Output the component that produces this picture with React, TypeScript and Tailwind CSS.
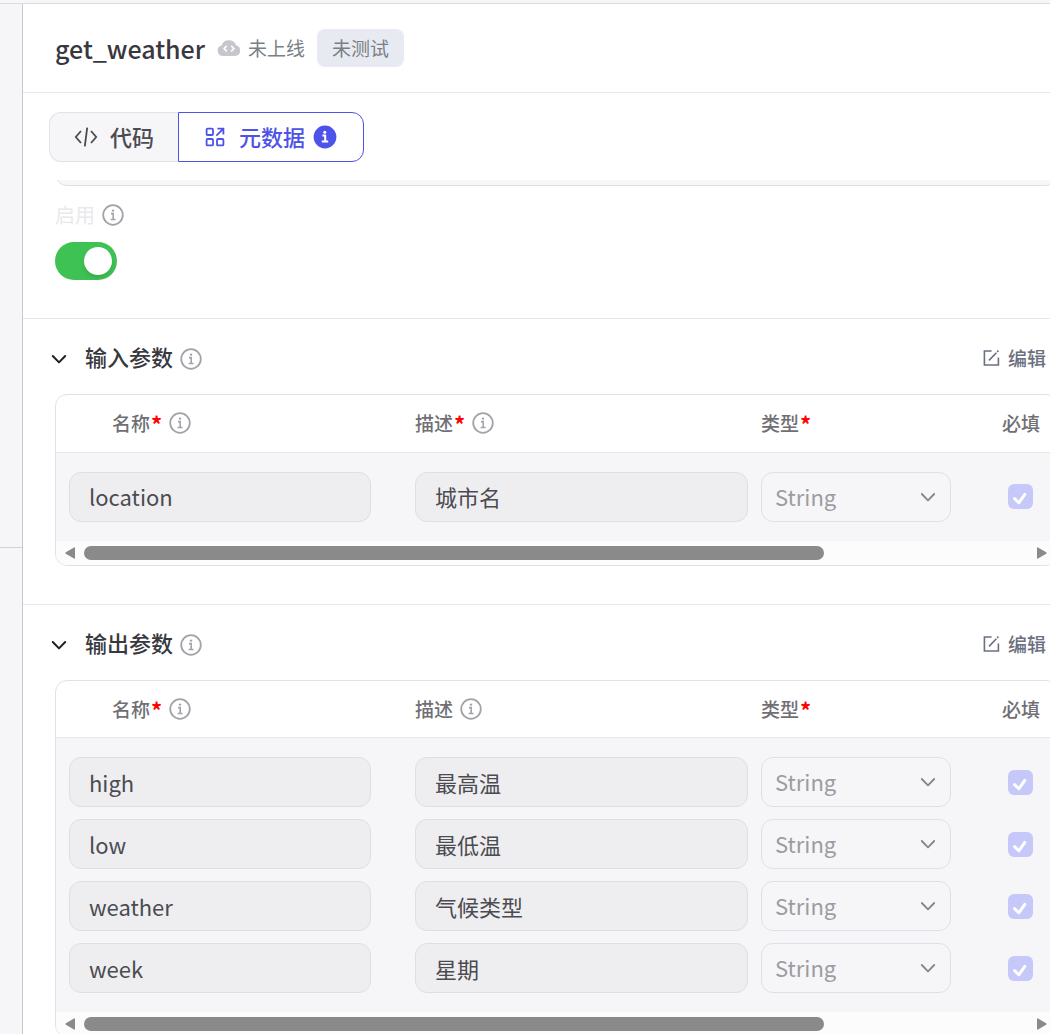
import { FunctionComponent, ReactNode } from 'react';

type Param = {
    name: string;
    description: string;
};

type ParamSectionProps = {
    title: string;
    params: Param[];
    descriptionRequired?: boolean;
};

const inputParams: Param[] = [{ name: 'location', description: '城市名' }];

const outputParams: Param[] = [
    { name: 'high', description: '最高温' },
    { name: 'low', description: '最低温' },
    { name: 'weather', description: '气候类型' },
    { name: 'week', description: '星期' },
];

const InfoIcon = () => (
    <svg viewBox="0 0 22 22" className="size-[22px] shrink-0 text-[#a3a4a9]" fill="none" stroke="currentColor">
        <circle cx="11" cy="11" r="9.8" strokeWidth="1.8" />
        <circle cx="11" cy="6.6" r="1.2" fill="currentColor" stroke="none" />
        <path d="M9 9.6h2.2v6M8.6 15.5h5" strokeWidth="1.6" />
    </svg>
);

const InfoSolidIcon = () => (
    <svg viewBox="0 0 24 24" className="size-6 shrink-0" fill="none">
        <circle cx="12" cy="12" r="11.4" fill="#4d53e8" />
        <circle cx="11.8" cy="7.2" r="1.5" fill="#fff" />
        <path d="M9.4 10.6h2.8v6M8.8 16.6h6.4" stroke="#fff" strokeWidth="2" />
    </svg>
);

const CloudCodeIcon = () => (
    <svg viewBox="0 0 24 18" className="h-[18px] w-6 shrink-0" fill="none">
        <path
            d="M6 17a5.4 5.4 0 0 1-1.4-10.6A7.6 7.6 0 0 1 19 6.2 5.5 5.5 0 0 1 18.2 17Z"
            fill="#c6c6cc"
        />
        <path d="m9.8 6.8-2.7 2.8 2.7 2.8M14.2 6.8l2.7 2.8-2.7 2.8" stroke="#fff" strokeWidth="1.6" />
    </svg>
);

const CodeIcon = () => (
    <svg viewBox="0 0 24 22" className="h-[22px] w-6 shrink-0" fill="none" stroke="#4b4b50" strokeWidth="1.8">
        <path d="m7 5-5.2 6L7 17M17 5l5.2 6-5.2 6M13.2 1.6 10.8 20.4" />
    </svg>
);

const MetadataIcon = () => (
    <svg viewBox="0 0 20 20" className="size-5 shrink-0" fill="none" stroke="#4d53e8" strokeWidth="1.8">
        <rect x="1.6" y="1.6" width="6.4" height="6.4" rx="1" />
        <rect x="1.6" y="12" width="6.4" height="6.4" rx="1" />
        <rect x="12" y="12" width="6.4" height="6.4" rx="1" />
        <path d="M11.4 8.6 18.2 1.8M12.4 1.6h6v6" />
    </svg>
);

const EditIcon = () => (
    <svg viewBox="0 0 18 18" className="size-[18px] shrink-0" fill="none" stroke="#6b7080" strokeWidth="1.6">
        <path d="M9.6 2H2.4v14h14V8.6M7 11.4l7.4-7.6" />
        <path d="m15.2 2.8 1.2-1.2" strokeWidth="1.8" />
    </svg>
);

const ChevronIcon = ({ className }: { className: string }) => (
    <svg viewBox="0 0 16 16" className={className} fill="none" stroke="currentColor" strokeLinecap="round" strokeLinejoin="round">
        <path d="m1.8 5 6.2 6.4L14.2 5" />
    </svg>
);

const HeaderCell = ({ children, required, info }: { children: ReactNode; required?: boolean; info?: boolean }) => (
    <span className="flex items-center">
        {children}
        {required && <span className="ml-px text-[22px] font-bold text-[#ff0000]">*</span>}
        {info && (
            <span className="ml-[7px]">
                <InfoIcon />
            </span>
        )}
    </span>
);

const ScrollBar = () => (
    <div className="flex h-6 items-center gap-[9px] bg-[#fcfcfc] pr-[10px] pl-[9px]" aria-hidden="true">
        <svg viewBox="0 0 10 12" className="h-3 w-[10px]" fill="#8a8a8a">
            <path d="M10 1v10q0 1-1 .6L.8 6.8q-.8-.8 0-1.6L9 .4Q10 0 10 1Z" />
        </svg>
        <div className="flex-1">
            <div className="h-[14px] w-[78.4%] rounded-full bg-[#8a8a8a]" />
        </div>
        <svg viewBox="0 0 10 12" className="h-3 w-[10px]" fill="#8a8a8a">
            <path d="M0 1v10q0 1 1 .6l8.2-4.8q.8-.8 0-1.6L1 .4Q0 0 0 1Z" />
        </svg>
    </div>
);

const ParamSection: FunctionComponent<ParamSectionProps> = ({ title, params, descriptionRequired }) => {
    const field =
        'block h-[50px] w-full rounded-xl border border-[#dfdfe2] bg-[#eeeef1] px-[19px] pb-px text-[22px] text-[#4b4b50]';

    return (
        <section className="border-t border-[#e8e8ea] pt-5 pb-[38px] pl-8">
            <div className="flex h-10 items-center justify-between pr-1">
                <button type="button" className="-ml-1 flex items-center">
                    <ChevronIcon className="size-4 stroke-2 text-[#1f1f24]" />
                    <h2 className="mr-[7px] ml-[18px] pb-1.5 text-[22px] leading-8 font-medium text-[#383840]">{title}</h2>
                    <InfoIcon />
                </button>
                <button type="button" className="flex items-center gap-2 pb-0.5 text-[19px] leading-7 font-medium text-[#6b7080]">
                    <EditIcon />
                    编辑
                </button>
            </div>

            <div className="mt-[15px] -mr-2 overflow-hidden rounded-xl border border-[#e2e2e5]">
                <table className="w-full table-fixed">
                    <colgroup>
                        <col className="w-[359px]" />
                        <col />
                        <col className="w-[241px]" />
                        <col className="w-[55px]" />
                    </colgroup>
                    <thead className="text-left text-[19px] leading-7 text-[#6f6f74]">
                        <tr className="h-[57px] border-b border-[#e8e8ea]">
                            <th className="pl-14 font-medium">
                                <HeaderCell required info>名称</HeaderCell>
                            </th>
                            <th className="font-medium">
                                <HeaderCell required={descriptionRequired} info>描述</HeaderCell>
                            </th>
                            <th className="font-medium">
                                <HeaderCell required>类型</HeaderCell>
                            </th>
                            <th className="font-medium whitespace-nowrap">必填</th>
                        </tr>
                    </thead>
                    <tbody className="bg-[#f6f6f9]">
                        {params.map(({ name, description }) => (
                            <tr key={name} className="group">
                                <td className="pr-11 pb-3 pl-[13px] group-first:pt-[19px] group-last:pb-[19px]">
                                    <input disabled aria-label="名称" defaultValue={name} className={field} />
                                </td>
                                <td className="pr-[13px] pb-3 group-first:pt-[19px] group-last:pb-[19px]">
                                    <input disabled aria-label="描述" defaultValue={description} className={field} />
                                </td>
                                <td className="pb-3 group-first:pt-[19px] group-last:pb-[19px]">
                                    <div className="relative w-[190px]">
                                        <select
                                            disabled
                                            aria-label="类型"
                                            className="block h-[50px] w-full appearance-none rounded-xl border border-[#e0dfe9] bg-transparent px-[13px] pb-px text-[22px] text-[#9c9ca0] disabled:opacity-100"
                                        >
                                            <option>String</option>
                                        </select>
                                        <ChevronIcon className="pointer-events-none absolute top-[17px] right-[15px] size-4 stroke-[1.8] text-[#85858a]" />
                                    </div>
                                </td>
                                <td className="pb-3 group-first:pt-[19px] group-last:pb-[19px]">
                                    <div className="relative ml-[6px] size-[25px]">
                                        <input
                                            type="checkbox"
                                            disabled
                                            defaultChecked
                                            aria-label="必填"
                                            className="block size-[25px] appearance-none rounded-md bg-[#c5c8f9]"
                                        />
                                        <svg
                                            viewBox="0 0 25 25"
                                            className="pointer-events-none absolute inset-0"
                                            fill="none"
                                            stroke="#fff"
                                            strokeWidth="3"
                                            strokeLinecap="round"
                                            strokeLinejoin="round"
                                        >
                                            <path d="m6.6 14.6 4.2 4.2 6-8.4" />
                                        </svg>
                                    </div>
                                </td>
                            </tr>
                        ))}
                    </tbody>
                </table>
                <ScrollBar />
            </div>
        </section>
    );
};

const App: FunctionComponent = () => {
    return (
        <div className="flex h-screen flex-col overflow-hidden bg-[#f6f6f9] pt-[3px] font-['Noto_Sans_CJK_SC',sans-serif]">
            <div className="flex min-h-0 flex-1 border-t border-[#dcdcdf]">
                <aside className="flex w-[23px] shrink-0 flex-col border-r border-[#c9c9cc]">
                    <div className="h-[544px] border-b border-[#d3d3d6]" />
                </aside>

                <main className="flex min-w-0 flex-1 flex-col overflow-hidden bg-white">
                    <header className="flex h-[89px] shrink-0 items-center border-b border-[#e8e8ea] pl-8">
                        <h1 className="text-[25px] leading-10 font-medium text-[#383840]">get_weather</h1>
                        <span className="ml-3 flex items-center gap-[7px] text-[19px] leading-7 text-[#7b7f86]">
                            <CloudCodeIcon />
                            未上线
                        </span>
                        <span className="ml-3 rounded-lg bg-[#e7eaf1] px-[15px] py-[5px] text-[19px] leading-7 text-[#7b7f86]">
                            未测试
                        </span>
                    </header>

                    <nav className="flex shrink-0 pt-[19px] pb-[18px] pl-[26px] text-[22px] leading-8 font-medium">
                        <button
                            type="button"
                            className="flex h-[50px] items-center gap-3 rounded-l-xl border border-r-0 border-[#e2e2e6] bg-[#f6f6f9] px-6 text-[#4b4b50]"
                        >
                            <CodeIcon />
                            <span className="pb-0.5">代码</span>
                        </button>
                        <button
                            type="button"
                            className="flex h-[50px] items-center rounded-r-xl border border-[#4d53e8] bg-white px-[26px] text-[#4d53e8]"
                        >
                            <MetadataIcon />
                            <span className="mr-2 ml-[14px] pb-0.5">元数据</span>
                            <InfoSolidIcon />
                        </button>
                    </nav>

                    <div className="min-h-0 flex-1 overflow-hidden">
                        {/* tail of the description field, scrolled under the tab bar */}
                        <div className="-mr-2 flex h-[6px] items-end overflow-hidden pl-8">
                            <textarea
                                disabled
                                aria-label="工具描述"
                                className="block h-20 w-full shrink-0 resize-none rounded-xl border border-[#e0e0e3] bg-[#f7f7f8]"
                            />
                        </div>

                        <div className="pt-[15px] pb-[38px] pl-8">
                            <div className="flex items-center gap-[7px]">
                                <label htmlFor="enabled" className="text-[20px] leading-7 text-[#e9e9eb]">
                                    启用
                                </label>
                                <InfoIcon />
                            </div>
                            <input
                                id="enabled"
                                type="checkbox"
                                role="switch"
                                defaultChecked
                                className="mt-[13px] flex h-[38px] w-[62px] appearance-none items-center rounded-full bg-[#3ec254] px-[5px] before:size-7 before:rounded-full before:bg-white before:shadow-md checked:justify-end"
                            />
                        </div>

                        <ParamSection title="输入参数" params={inputParams} descriptionRequired />
                        <ParamSection title="输出参数" params={outputParams} />
                    </div>
                </main>
            </div>
        </div>
    );
};

export default App;
